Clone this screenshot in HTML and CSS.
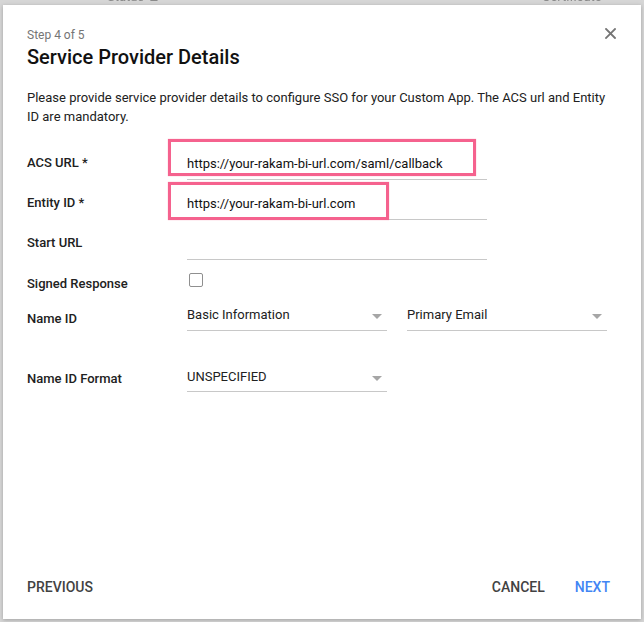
FILE: index.html
```html
<!DOCTYPE html>
<html>
<head>
<meta charset="utf-8">
<link rel="stylesheet" href="styles.css">
</head>
<body>
<div class="backdrop-head">
  <span class="bh-status">Status ▲</span>
  <span class="bh-cert">Certificate</span>
</div>
<div class="dialog">
  <button class="close" aria-label="Close">
    <svg width="11" height="11" viewBox="0 0 11 11"><path d="M1 1L10 10M10 1L1 10" stroke="#757575" stroke-width="1.8" stroke-linecap="square"/></svg>
  </button>
  <div class="step">Step 4 of 5</div>
  <h1 class="title">Service Provider Details</h1>
  <p class="desc">Please provide service provider details to configure SSO for your Custom App. The ACS url and Entity ID are mandatory.</p>

  <div class="form">
    <div class="row row-input">
      <div class="label">ACS URL *</div>
      <div class="field wide">
        <div class="value">https://your-rakam-bi-url.com/saml/callback</div>
        <div class="hl hl-acs"></div>
      </div>
    </div>
    <div class="row row-input">
      <div class="label">Entity ID *</div>
      <div class="field wide">
        <div class="value">https://your-rakam-bi-url.com</div>
        <div class="hl hl-entity"></div>
      </div>
    </div>
    <div class="row row-input">
      <div class="label">Start URL</div>
      <div class="field wide">
        <div class="value"></div>
      </div>
    </div>
    <div class="row row-check">
      <div class="label">Signed Response</div>
      <div class="checkbox"></div>
    </div>
    <div class="row row-nameid">
      <div class="label">Name ID</div>
      <div class="selects">
        <div class="select"><span>Basic Information</span><i class="arrow"></i></div>
        <div class="select"><span>Primary Email</span><i class="arrow"></i></div>
      </div>
    </div>
    <div class="row row-format">
      <div class="label">Name ID Format</div>
      <div class="select"><span>UNSPECIFIED</span><i class="arrow"></i></div>
    </div>
  </div>

  <div class="footer">
    <button class="btn">PREVIOUS</button>
    <div class="spacer"></div>
    <button class="btn">CANCEL</button>
    <button class="btn primary">NEXT</button>
  </div>
</div>
</body>
</html>
```
FILE: styles.css
```css
* { box-sizing: border-box; }
html, body { margin: 0; padding: 0; }
body {
  width: 644px;
  height: 622px;
  overflow: hidden;
  background: #d6d6d6;
  font-family: Roboto, "Liberation Sans", Arial, sans-serif;
  color: #212121;
}
.backdrop-head {
  height: 5px;
  overflow: hidden;
  position: relative;
  filter: blur(0.6px);
  color: #8a8a8a;
  font-size: 13px;
}
.bh-status, .bh-cert {
  position: absolute;
  top: -11px;
  line-height: 16px;
}
.bh-status { left: 107px; }
.bh-cert { left: 542px; }
.dialog {
  position: relative;
  margin-left: 3px;
  width: 638px;
  height: 614px;
  background: #fff;
  box-shadow: 0 1px 4px rgba(0,0,0,0.25);
  padding: 22px 24px 22px 24px;
  display: flex;
  flex-direction: column;
}
.close {
  position: absolute;
  top: 23px;
  right: 25px;
  width: 11px;
  height: 11px;
  padding: 0;
  border: 0;
  background: none;
  display: flex;
}
.step {
  font-size: 12px;
  line-height: 16px;
  color: #757575;
}
.title {
  margin: 2px 0 0;
  font-size: 20px;
  line-height: 24px;
  font-weight: 500;
  color: #111;
}
.desc {
  margin: 19px 0 0;
  font-size: 13px;
  line-height: 19px;
  color: #212121;
}
.form {
  margin-top: 14px;
  display: flex;
  flex-direction: column;
}
.row {
  display: flex;
  align-items: flex-start;
}
.label {
  width: 160px;
  flex: none;
  font-size: 13px;
  font-weight: 500;
  line-height: 20px;
  color: #212121;
}
.row-input { height: 40px; }
.row-input .label { padding-top: 13px; }
.field {
  position: relative;
  height: 40px;
  border-bottom: 1px solid #c8c8c8;
}
.field.wide { width: 300px; }
.value {
  padding-top: 14px;
  font-size: 13px;
  line-height: 20px;
  color: #111;
}
.hl {
  position: absolute;
  left: -19px;
  border: 3px solid #f5628e;
  box-shadow: 0 0 1px rgba(245,98,142,0.6);
}
.hl-acs { top: -1px; width: 308px; height: 37px; }
.hl-entity { top: 2px; width: 221px; height: 38px; }
.row-check { height: 42px; }
.row-check .label { padding-top: 14px; }
.checkbox {
  margin-top: 13px;
  margin-left: 2px;
  width: 14px;
  height: 14px;
  border: 1.5px solid #8f8f8f;
  border-radius: 2px;
}
.row-nameid .label { padding-top: 7px; }
.selects { display: flex; gap: 20px; }
.select {
  width: 200px;
  height: 29px;
  padding-top: 3px;
  border-bottom: 1px solid #c8c8c8;
  display: flex;
  align-items: flex-start;
  justify-content: space-between;
  font-size: 13px;
  line-height: 20px;
  color: #212121;
}
.arrow {
  margin-top: 9px;
  margin-right: 5px;
  width: 0;
  height: 0;
  border-left: 5px solid transparent;
  border-right: 5px solid transparent;
  border-top: 5px solid #a6a6a6;
}
.row-format { margin-top: 33px; }
.row-format .label { padding-top: 5px; }
.row-format .select { height: 28px; }
.footer {
  margin-top: auto;
  display: flex;
  align-items: center;
}
.spacer { flex: 1; }
.btn {
  padding: 0;
  border: 0;
  background: none;
  font-family: inherit;
  font-size: 14px;
  font-weight: 500;
  line-height: 20px;
  color: #424242;
}
.btn + .btn { margin-left: 30px; }
.btn.primary { color: #4285f4; margin-right: 7px; }
```
